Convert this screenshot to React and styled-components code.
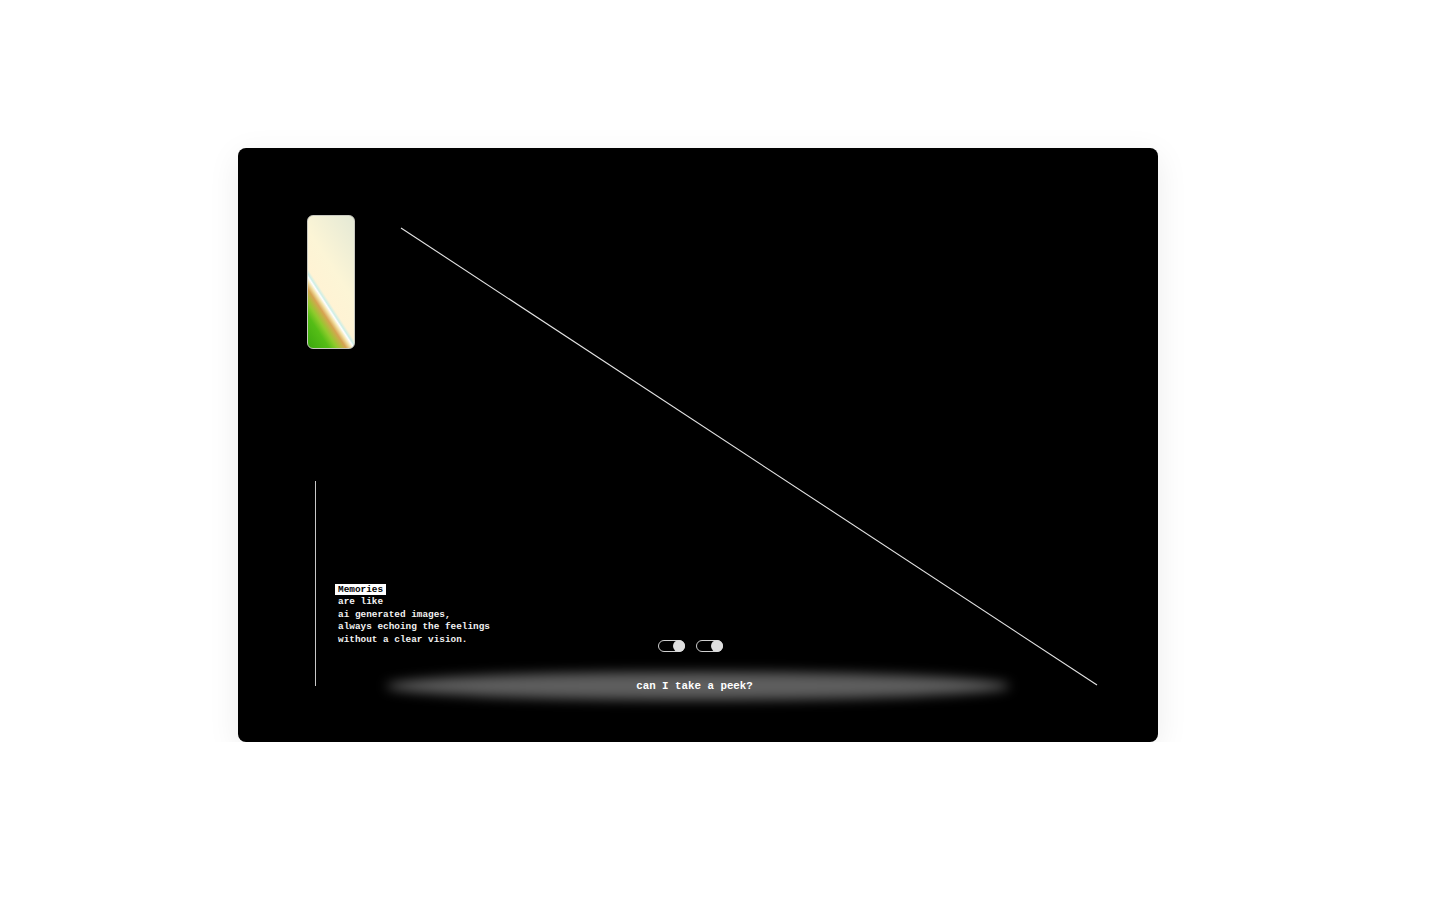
import styled, { createGlobalStyle } from "styled-components";

const GlobalStyle = createGlobalStyle`
  body {
    margin: 0;
    background: #ffffff;
    font-family: "Liberation Mono", "Courier New", monospace;
  }
`;

export default function App() {
  return (
    <>
      <GlobalStyle />
      <Page>
        <Card>
          <Diagonal viewBox="0 0 920 594" aria-hidden="true">
            <line x1="163" y1="80" x2="859" y2="537" stroke="#e4e4e4" strokeWidth="1.1" />
          </Diagonal>
          <TopRow>
            <Pill />
          </TopRow>
          <Bottom>
            <VLine />
            <Poem>
              <Highlight>Memories</Highlight>
              <br />
              are like
              <br />
              ai generated images,
              <br />
              always echoing the feelings
              <br />
              without a clear vision.
            </Poem>
            <Toggles>
              <Toggle />
              <Toggle />
            </Toggles>
            <Peek>
              <span>can I take a peek?</span>
            </Peek>
          </Bottom>
        </Card>
      </Page>
    </>
  );
}

// Styles
const Page = styled.div`
  padding: 148px 0 0 238px;
`;

const Card = styled.div`
  position: relative;
  width: 920px;
  height: 594px;
  box-sizing: border-box;
  padding-top: 67px;
  background: #000;
  border-radius: 8px;
  box-shadow: 0 8px 32px rgba(0, 0, 0, 0.08);
  display: flex;
  flex-direction: column;
`;

const Diagonal = styled.svg`
  position: absolute;
  left: 0;
  top: 0;
  width: 920px;
  height: 594px;
  pointer-events: none;
`;

const TopRow = styled.div`
  display: flex;
  padding-left: 69px;
`;

const Pill = styled.div`
  width: 48px;
  height: 134px;
  box-sizing: border-box;
  border: 1px solid #c9c9c0;
  border-radius: 6px;
  background: linear-gradient(
    57deg,
    #3aa80e 0%,
    #55bd16 16%,
    #8fcb2c 22%,
    #b9b640 26%,
    #d6a352 29%,
    #f3e2a6 32.5%,
    #ffffff 35%,
    #cdeee6 36.5%,
    #fff3d4 39%,
    #fcf5d6 58%,
    #e4e9d6 100%
  );
`;

const Bottom = styled.div`
  margin-top: 132px;
  display: grid;
  grid-template-columns: 77px 1px 1fr;
  grid-template-rows: 159px 12px auto;
`;

const VLine = styled.div`
  grid-column: 2;
  grid-row: 1 / 4;
  width: 1px;
  height: 205px;
  background: #c8c8c8;
`;

const Poem = styled.div`
  grid-column: 3;
  grid-row: 1 / 3;
  align-self: end;
  margin-bottom: 6px;
  padding-left: 22px;
  color: #f2f2f2;
  font-size: 9.4px;
  font-weight: 700;
  line-height: 12.5px;
  white-space: pre;
`;

const Highlight = styled.span`
  background: #ffffff;
  color: #000;
  margin-left: -3px;
  padding: 0 3px;
`;

const Toggles = styled.div`
  grid-column: 1 / -1;
  grid-row: 2;
  justify-self: center;
  margin-right: 15px;
  display: flex;
  gap: 11px;
  align-items: center;
`;

const Toggle = styled.div`
  position: relative;
  width: 27px;
  height: 12px;
  box-sizing: border-box;
  border: 1px solid #d0d0d0;
  border-radius: 6px;

  &::after {
    content: "";
    position: absolute;
    right: -1px;
    top: -1px;
    width: 12px;
    height: 12px;
    border-radius: 50%;
    background: #dedede;
  }
`;

const Peek = styled.div`
  grid-column: 1 / -1;
  grid-row: 3;
  justify-self: center;
  margin-top: 10px;
  position: relative;
  width: 642px;
  height: 48px;
  display: flex;
  align-items: center;
  justify-content: center;
  padding-right: 7px;
  box-sizing: border-box;
  color: #ffffff;
  font-size: 10.8px;
  font-weight: 700;

  &::before {
    content: "";
    position: absolute;
    inset: 10px 9px;
    border-radius: 50%;
    background: #5e5e5e;
    filter: blur(6px);
  }

  span {
    position: relative;
  }
`;
